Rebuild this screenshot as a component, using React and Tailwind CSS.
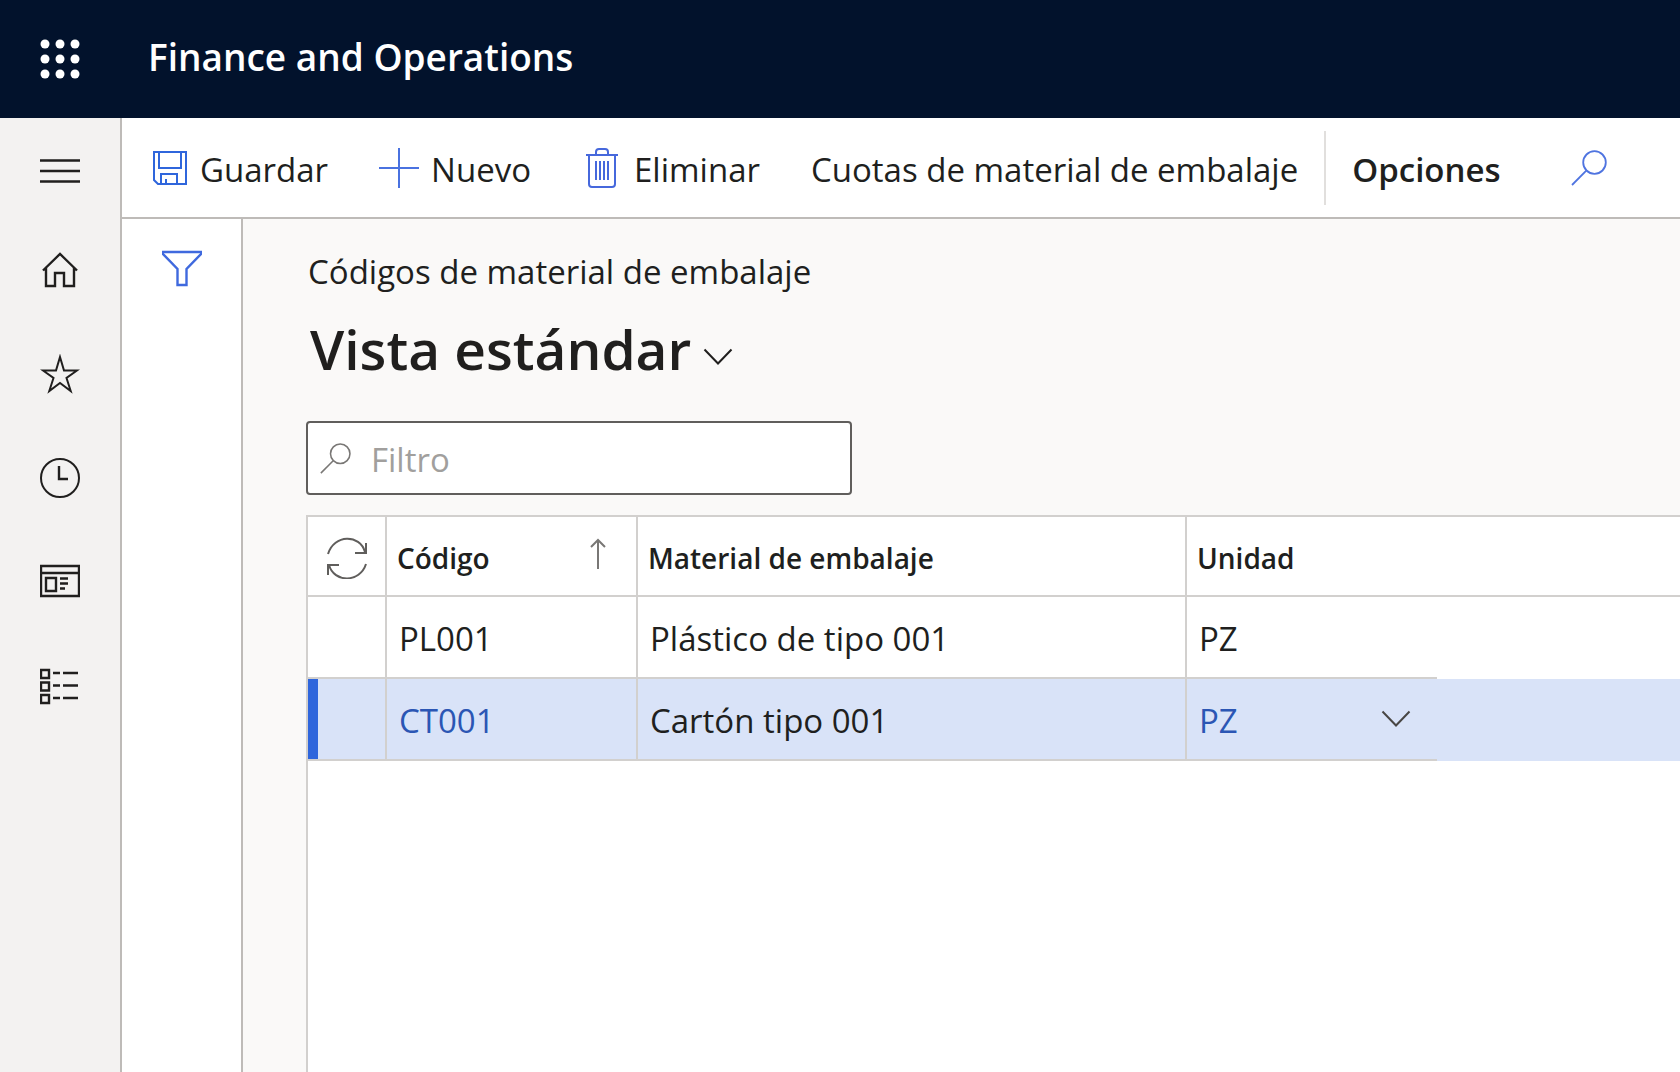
import React, { useState } from 'react';

const rows = [
  { code: 'PL001', material: 'Plástico de tipo 001', unit: 'PZ' },
  { code: 'CT001', material: 'Cartón tipo 001', unit: 'PZ' },
];

const Icon = ({ children, className = 'text-[#201f1e]', size = 40 }) => (
  <svg
    className={`shrink-0 ${className}`}
    width={size}
    height={size}
    viewBox={`0 0 ${size} ${size}`}
    fill="none"
    stroke="currentColor"
    strokeWidth="2"
    aria-hidden="true"
  >
    {children}
  </svg>
);

const SearchIcon = ({ className, size }) => (
  <svg
    className={`shrink-0 ${className}`}
    width={size}
    height={size}
    viewBox="0 0 36 36"
    fill="none"
    stroke="currentColor"
    strokeWidth="1.8"
    aria-hidden="true"
  >
    <circle cx="23.5" cy="12.5" r="11.3" />
    <path d="M15.3 20.7 1 35" />
  </svg>
);

const Chevron = ({ className }) => (
  <svg
    className={`shrink-0 ${className}`}
    width="30"
    height="18"
    viewBox="0 0 30 18"
    fill="none"
    stroke="currentColor"
    strokeWidth="2"
    aria-hidden="true"
  >
    <path d="M1.5 1.5 15 15.5 28.5 1.5" />
  </svg>
);

const navItems = [
  {
    label: 'Inicio',
    icon: <path strokeWidth="2.4" d="M3 20.5 20 4l17 16.5M6 18v18h9V23h9v13h10V18" />,
  },
  {
    label: 'Favoritos',
    icon: <path d="M20 3l4 13.5h13L26.5 24l4.2 13L20 29 9.300 37l4.200-13L3 16.5h13z" />,
  },
  {
    label: 'Reciente',
    icon: (
      <>
        <circle cx="20" cy="20" r="19" />
        <path d="M19 8v13h9" strokeWidth="2.4" />
      </>
    ),
  },
  {
    label: 'Áreas de trabajo',
    icon: (
      <g strokeWidth="2.4">
        <path d="M1 4h38v30H1zM1 11h38M6 16h10v13H6z" />
        <path d="M20 16.5h8M20 21.5h8M20 26.5h5" />
      </g>
    ),
  },
  {
    label: 'Módulos',
    icon: (
      <g strokeWidth="2.4">
        <path d="M1 4h8v8H1zM1 16.5h8v8H1zM1 29h8v8H1z" />
        <path d="M13 7h7M23 7h15M13 19.500h7M23 19.500h15M13 32h7M23 32h15" />
      </g>
    ),
  },
];

const App = () => {
  const [filter, setFilter] = useState('');
  const [unit, setUnit] = useState('PZ');
  const [selected, setSelected] = useState(1);

  return (
    <div className="min-h-screen flex flex-col bg-white text-[#201f1e] font-['Open_Sans','Noto_Sans',sans-serif]">
      <header className="h-[118px] shrink-0 flex items-center bg-[#02122c] text-white">
        <button type="button" aria-label="Iniciador de aplicaciones" className="w-[120px] flex justify-center">
          <svg width="40" height="40" viewBox="0 0 40 40" fill="currentColor" aria-hidden="true">
            {[5, 20, 35].map((y) => [5, 20, 35].map((x) => <circle key={`${x}-${y}`} cx={x} cy={y} r="4.5" />))}
          </svg>
        </button>
        <span className="pl-7 pb-1 text-[37px] leading-[48px] font-semibold">Finance and Operations</span>
      </header>

      <div className="flex-1 flex">
        <nav className="w-[122px] shrink-0 flex flex-col items-center gap-16 pt-9 bg-[#f3f2f1] border-r-2 border-[#bebbb8]">
          <button type="button" aria-label="Expandir panel de navegación">
            <svg width="40" height="32" viewBox="0 0 40 32" stroke="#201f1e" strokeWidth="2.4" aria-hidden="true">
              <path d="M0 6.5h40M0 17h40M0 27.5h40" />
            </svg>
          </button>
          {navItems.map((item) => (
            <a key={item.label} href="#" aria-label={item.label}>
              <Icon>{item.icon}</Icon>
            </a>
          ))}
        </nav>

        <div className="flex-1 min-w-0 flex flex-col">
          <div className="h-[101px] shrink-0 flex items-center pl-[30px] border-b-2 border-[#bebbb8] text-[33px] leading-[44px] whitespace-nowrap">
            <button type="button" className="pt-1 flex items-center gap-3">
              <Icon className="mb-1 text-[#2f66dc]" size={36}>
                <path d="M2 2h32v32H6l-4-4zM7 2v16h22V2M9 34V24h16v10M14 34v-5" />
              </Icon>
              Guardar
            </button>
            <button type="button" className="pt-1 ml-[51px] flex items-center gap-3">
              <Icon className="mb-1 text-[#4a72e0]">
                <path d="M20 0v40M0 20h40" />
              </Icon>
              Nuevo
            </button>
            <button type="button" className="pt-1 ml-[51px] flex items-center gap-3">
              <Icon className="mb-1 text-[#4668dc]">
                <path d="M4 7h32M7 7v29q0 3 3 3h20q3 0 3-3V7M14 7V4q0-3 3-3h6q3 0 3 3v3M14 13v19M18 13v19M22 13v19M26 13v19" />
              </Icon>
              Eliminar
            </button>
            <button type="button" className="pt-1 ml-[51px]">Cuotas de material de embalaje</button>
            <div className="h-[74px] w-[2px] mx-[26px] bg-[#e1dfdd]" />
            <button type="button" className="pt-1 font-semibold">Opciones</button>
            <button type="button" aria-label="Buscar" className="ml-[70px]">
              <SearchIcon className="text-[#4f74e0]" size={36} />
            </button>
          </div>

          <div className="flex-1 flex">
            <aside className="w-[121px] shrink-0 flex justify-center items-start pt-[30px] border-r-2 border-[#bebbb8]">
              <button type="button" aria-label="Mostrar filtros">
                <Icon className="text-[#3f69de]">
                  <path strokeWidth="2.4" d="M1 3h38v2L24.500 20V36h-9V20L1 5z" />
                </Icon>
              </button>
            </aside>

            <main className="flex-1 min-w-0 flex flex-col pl-[63px] pt-[31px] bg-[#faf9f8]">
              <p className="pl-[2px] text-[33px] leading-[44px]">Códigos de material de embalaje</p>
              <h1 className="mt-[15px] pl-1 text-[55px] leading-[80px] font-semibold">
                <button type="button" className="flex items-center gap-3">
                  Vista estándar
                  <Chevron className="mt-4" />
                </button>
              </h1>

              <label className="mt-[32px] w-[546px] h-[74px] flex items-center gap-5 px-3 bg-white border-2 border-[#605e5c] rounded">
                <SearchIcon className="text-[#797775]" size={31} />
                <input
                  type="text"
                  aria-label="Filtro"
                  placeholder="Filtro"
                  value={filter}
                  onChange={(e) => setFilter(e.target.value)}
                  className="flex-1 min-w-0 pt-1 text-[33px] leading-[44px] outline-none placeholder:text-[#a19f9d]"
                />
              </label>

              <div className="mt-5 flex-1 bg-white border-l-2 border-t-2 border-[#d2d0ce]">
                <table className="w-full table-fixed border-separate border-spacing-0 text-left">
                  <colgroup>
                    <col className="w-[79px]" />
                    <col className="w-[251px]" />
                    <col className="w-[549px]" />
                    <col className="w-[250px]" />
                    <col />
                  </colgroup>
                  <thead className="text-[28px] leading-[40px]">
                    <tr className="h-20">
                      <th className="pt-1 border-b-2 border-r-2 border-[#d2d0ce]">
                        <button type="button" aria-label="Actualizar" className="flex mx-auto">
                          <Icon className="text-[#605e5c]" size={42}>
                            <path d="M2 17C8-3 34-3 39 15M29 16h11V6M40 27C34 46 8 46 3 28M13 28H2v10" />
                          </Icon>
                        </button>
                      </th>
                      <th className="pt-1 pl-[10px] pr-6 border-b-2 border-r-2 border-[#d2d0ce] font-semibold">
                        <div className="flex items-center justify-between">
                          Código
                          <svg className="text-[#797775]" width="28" height="40" viewBox="0 0 28 40" fill="none" stroke="currentColor" strokeWidth="2" aria-hidden="true">
                            <path d="M14 31V2M7 9l7-7 7 7" />
                          </svg>
                        </div>
                      </th>
                      <th className="pt-1 pl-[10px] border-b-2 border-r-2 border-[#d2d0ce] font-semibold">Material de embalaje</th>
                      <th className="pt-1 pl-[10px] border-b-2 border-[#d2d0ce] font-semibold">Unidad</th>
                      <td className="border-b-2 border-[#d2d0ce]" />
                    </tr>
                  </thead>
                  <tbody className="text-[33px] leading-[44px]">
                    {rows.map((row, i) => {
                      const active = i === selected;
                      return (
                        <tr key={row.code} className={active ? 'h-[82px] bg-[#d9e3f8]' : 'h-[82px]'} onClick={() => setSelected(i)}>
                          <td className="p-0 border-b-2 border-r-2 border-[#d2d0ce]">
                            {active && <div className="h-20 w-[10px] bg-[#2f66dc]" />}
                          </td>
                          <td className="pt-1 pl-3 border-b-2 border-r-2 border-[#d2d0ce]">
                            {active ? <a href="#" className="text-[#2b56b4]">{row.code}</a> : row.code}
                          </td>
                          <td className="pt-1 pl-3 border-b-2 border-r-2 border-[#d2d0ce]">{row.material}</td>
                          <td className="pt-1 pl-3 pr-[26px] border-b-2 border-[#d2d0ce]">
                            {active ? (
                              <div className="flex items-center">
                                <select
                                  aria-label="Unidad"
                                  value={unit}
                                  onChange={(e) => setUnit(e.target.value)}
                                  className="flex-1 appearance-none text-[#2b56b4] outline-none"
                                >
                                  <option>PZ</option>
                                </select>
                                <Chevron className="mb-1 text-[#484644]" />
                              </div>
                            ) : (
                              row.unit
                            )}
                          </td>
                          <td />
                        </tr>
                      );
                    })}
                  </tbody>
                </table>
              </div>
            </main>
          </div>
        </div>
      </div>
    </div>
  );
};

export default App;
